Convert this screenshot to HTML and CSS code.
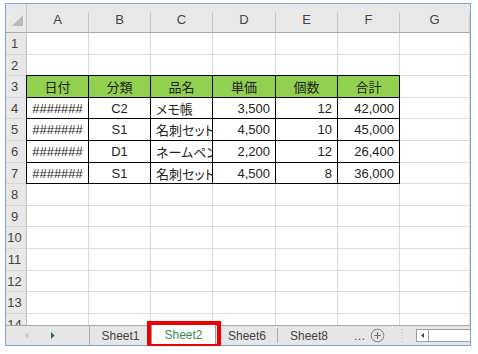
FILE: index.html
```html
<!DOCTYPE html>
<html lang="ja">
<head>
<meta charset="utf-8">
<title>Sheet</title>
<link rel="stylesheet" href="styles.css">
</head>
<body>
<div class="frame">
  <div class="sheet">
    <div class="c corner"><svg width="20" height="28" viewBox="0 0 20 28"><polygon points="17,11 17,22 6,22" fill="#b9b9b9"/></svg></div>
    <div class="c ch">A</div><div class="c ch">B</div><div class="c ch">C</div><div class="c ch">D</div><div class="c ch">E</div><div class="c ch">F</div><div class="c ch">G</div>

    <div class="c rh">1</div><div class="c"></div><div class="c"></div><div class="c"></div><div class="c"></div><div class="c"></div><div class="c"></div><div class="c"></div>
    <div class="c rh">2</div><div class="c"></div><div class="c"></div><div class="c"></div><div class="c"></div><div class="c"></div><div class="c"></div><div class="c"></div>

    <div class="c rh">3</div><div class="c th l">日付</div><div class="c th">分類</div><div class="c th">品名</div><div class="c th">単価</div><div class="c th">個数</div><div class="c th">合計</div><div class="c"></div>

    <div class="c rh">4</div><div class="c td l ctr">#######</div><div class="c td ctr">C2</div><div class="c td">メモ帳</div><div class="c td rt">3,500</div><div class="c td rt">12</div><div class="c td rt">42,000</div><div class="c"></div>
    <div class="c rh">5</div><div class="c td l ctr">#######</div><div class="c td ctr">S1</div><div class="c td">名刺セット</div><div class="c td rt">4,500</div><div class="c td rt">10</div><div class="c td rt">45,000</div><div class="c"></div>
    <div class="c rh">6</div><div class="c td l ctr">#######</div><div class="c td ctr">D1</div><div class="c td">ネームペン</div><div class="c td rt">2,200</div><div class="c td rt">12</div><div class="c td rt">26,400</div><div class="c"></div>
    <div class="c rh">7</div><div class="c td l ctr">#######</div><div class="c td ctr">S1</div><div class="c td">名刺セット</div><div class="c td rt">4,500</div><div class="c td rt">8</div><div class="c td rt">36,000</div><div class="c"></div>

    <div class="c rh">8</div><div class="c"></div><div class="c"></div><div class="c"></div><div class="c"></div><div class="c"></div><div class="c"></div><div class="c"></div>
    <div class="c rh">9</div><div class="c"></div><div class="c"></div><div class="c"></div><div class="c"></div><div class="c"></div><div class="c"></div><div class="c"></div>
    <div class="c rh">10</div><div class="c"></div><div class="c"></div><div class="c"></div><div class="c"></div><div class="c"></div><div class="c"></div><div class="c"></div>
    <div class="c rh">11</div><div class="c"></div><div class="c"></div><div class="c"></div><div class="c"></div><div class="c"></div><div class="c"></div><div class="c"></div>
    <div class="c rh">12</div><div class="c"></div><div class="c"></div><div class="c"></div><div class="c"></div><div class="c"></div><div class="c"></div><div class="c"></div>
    <div class="c rh">13</div><div class="c"></div><div class="c"></div><div class="c"></div><div class="c"></div><div class="c"></div><div class="c"></div><div class="c"></div>
    <div class="c rh">14</div><div class="c"></div><div class="c"></div><div class="c"></div><div class="c"></div><div class="c"></div><div class="c"></div><div class="c"></div>
  </div>

  <div class="tabbar">
    <div class="nav">
      <svg class="arr-l" width="4" height="7" viewBox="0 0 4 7"><polygon points="3.5,0 3.5,7 0,3.5" fill="#c6c6c6"/></svg>
      <svg class="arr-r" width="4" height="7" viewBox="0 0 4 7"><polygon points="0,0 0,7 3.5,3.5" fill="#1e6e3e"/></svg>
    </div>
    <div class="tab t1">Sheet1</div>
    <div class="tab active">Sheet2</div>
    <div class="tab sep">Sheet6</div>
    <div class="tab">Sheet8</div>
    <div class="more">...</div>
    <svg class="plus" width="15" height="15" viewBox="0 0 15 15"><circle cx="7.5" cy="7.5" r="6.3" fill="none" stroke="#7c7c7c" stroke-width="1"/><path d="M7.5 4.2v6.6M4.2 7.5h6.6" stroke="#6a6a6a" stroke-width="1.2"/></svg>
    <svg class="dots" width="2" height="15" viewBox="0 0 2 15"><path d="M1 1v1M1 4v1M1 7v1M1 10v1M1 13v1" stroke="#bdbdbd" stroke-width="1"/></svg>
    <div class="scroll">
      <div class="sarrow"><svg width="3" height="5" viewBox="0 0 3 5"><polygon points="3,0 3,5 0,2.5" fill="#444"/></svg></div>
      <div class="strack"></div>
    </div>
  </div>

  <div class="highlight"></div>
</div>
</body>
</html>
```

FILE: styles.css
```css
* { box-sizing: border-box; }

body {
  margin: 0;
  background: #fff;
  font-family: "Liberation Sans", "Noto Sans CJK JP", sans-serif;
}

.frame {
  margin: 3px 0 0 5px;
  width: 466px;
  height: 343px;
  border: 1px solid #7ca4de;
  display: flex;
  flex-direction: column;
  position: relative;
}

.sheet {
  height: 321px;
  flex: none;
  overflow: hidden;
  display: grid;
  grid-template-columns: 21px 62px 62px 62px 63px 62px 62px 1fr;
  grid-template-rows: 29px 22px 21px 22px 21px 22px 22px 21px 22px 21px 22px 22px 21px 22px 22px;
  font-size: 13px;
  color: #222;
  font-feature-settings: "palt";
}

.c {
  border-right: 1px solid #dadada;
  border-bottom: 1px solid #dadada;
  display: flex;
  align-items: center;
  white-space: nowrap;
  overflow: hidden;
  padding: 0 5px;
  min-width: 0;
}

.corner {
  padding: 0;
  background: #e8e8e8;
  border-right: 1px solid #c8c8c8;
  border-bottom: 1px solid #ababab;
  align-items: flex-start;
}

.ch {
  background: #e8e8e8 linear-gradient(#c8c8c8, #c8c8c8) right 8px / 1px 100% no-repeat;
  border-right: 0;
  padding-right: 6px;
  border-bottom: 1px solid #ababab;
  justify-content: center;
  color: #444;
  padding-top: 3px;
}

.rh {
  background: #e8e8e8;
  border-right: 1px solid #c2c2c2;
  border-bottom: 1px solid #d6d6d6;
  justify-content: center;
  color: #444;
  padding: 0 3px 0 0;
}

.th {
  background: #92d050;
  border-color: #000;
  justify-content: center;
  box-shadow: 0 -1px 0 #000;
  color: #1e1e1e;
}

.td { border-color: #000; }

.l.th { box-shadow: 0 -1px 0 #000, -1px 0 0 #000, -1px -1px 0 #000; }
.l.td { box-shadow: -1px 0 0 #000; }

.ctr { justify-content: center; }
.rt { justify-content: flex-end; }

.tabbar {
  height: 20px;
  flex: none;
  border-top: 1px solid #a6a6a6;
  background: #e6e6e6;
  display: flex;
  align-items: center;
  font-size: 12px;
  color: #444;
}

.nav {
  width: 84px;
  height: 100%;
  border-right: 1px solid #ababab;
  display: flex;
  align-items: center;
  padding-left: 19px;
}

.arr-l { margin-right: 22px; }

.tab {
  width: 62px;
  height: 100%;
  display: flex;
  align-items: center;
  justify-content: center;
}

.t1 { width: 61px; }

.sep {
  background: linear-gradient(#ababab, #ababab) right center / 1px 15px no-repeat;
}

.active {
  width: 65px;
  height: 20px;
  margin-top: -1px;
  background: #fff;
  color: #3b8a5c;
  border-left: 1px solid #9c9c9c;
  border-right: 1px solid #9c9c9c;
}

.more {
  padding-left: 14px;
  color: #217346;
  letter-spacing: 0.5px;
}

.plus { margin-left: 4px; }
.dots { margin-left: 16px; }

.scroll {
  margin-left: 13px;
  flex: 1;
  height: 13px;
  border: 1px solid #a0a0a0;
  border-right: 0;
  background: #fff;
  display: flex;
}

.sarrow {
  width: 12px;
  border-right: 1px solid #a0a0a0;
  display: flex;
  align-items: center;
  justify-content: center;
}

.strack { flex: 1; }

.highlight {
  position: absolute;
  left: 141px;
  top: 317px;
  width: 74px;
  height: 27px;
  border: 4px solid #ee0000;
}
```
